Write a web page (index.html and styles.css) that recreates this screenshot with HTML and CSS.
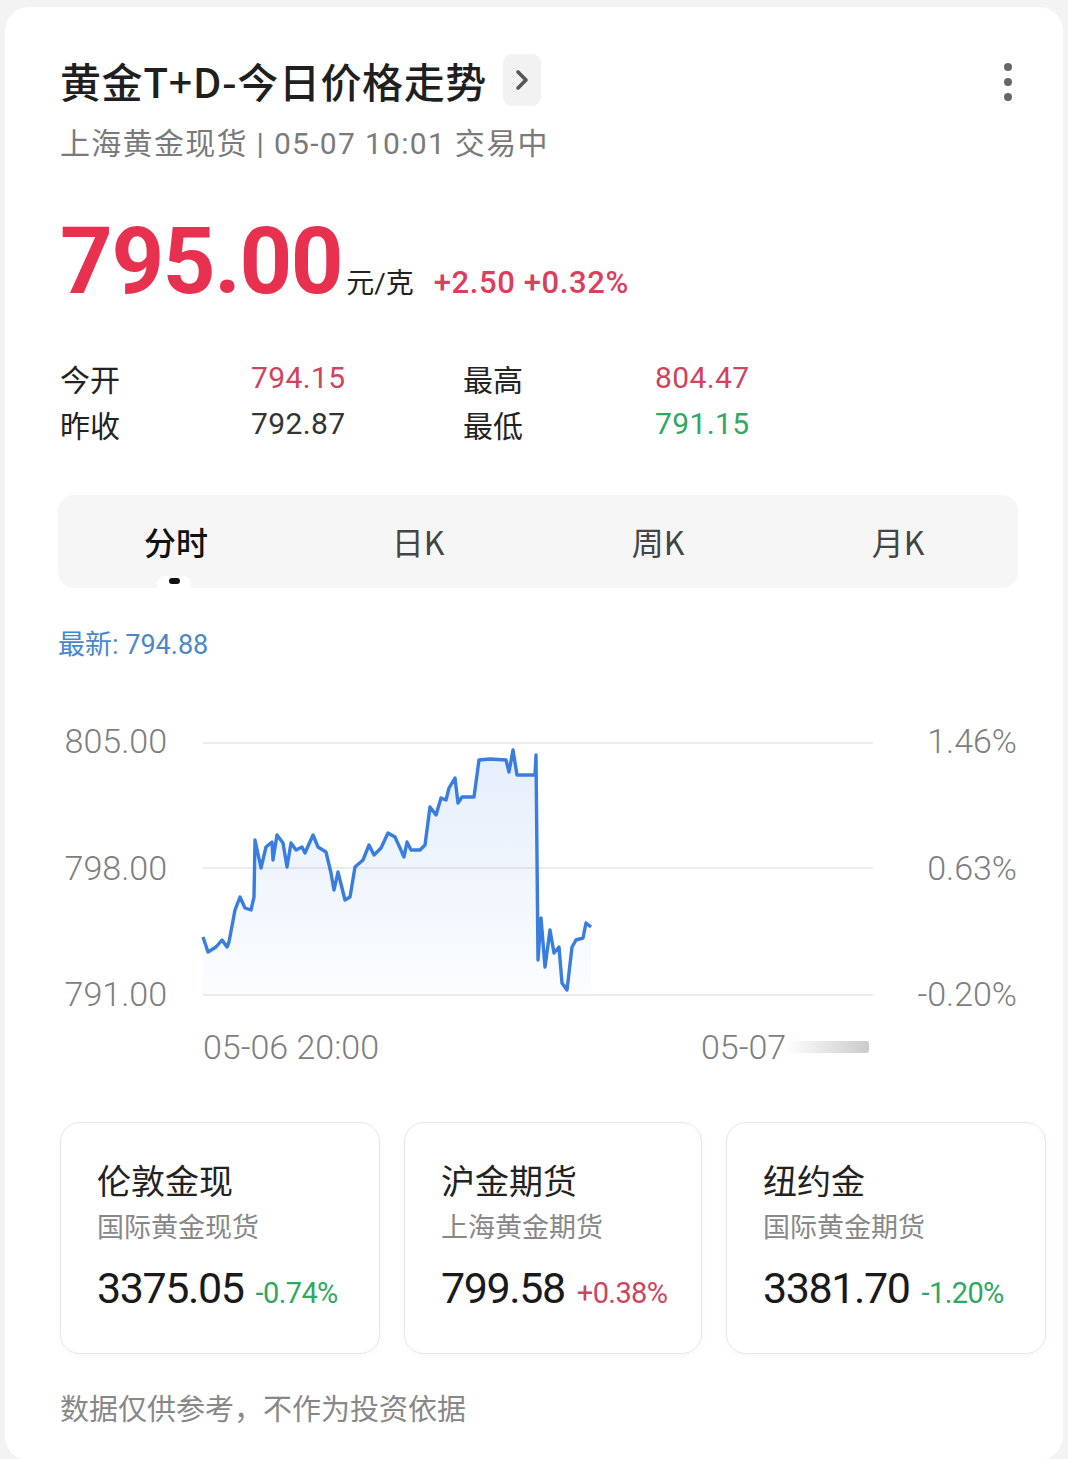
FILE: index.html
```html
<!DOCTYPE html>
<html lang="zh-CN">
<head>
    <meta charset="UTF-8">
    <meta name="viewport" content="width=device-width, initial-scale=1.0">
    <title>黄金T+D-今日价格走势</title>
    <link rel="stylesheet" href="styles.css">
</head>
<body>
    <main class="card">
        <!-- 标题 -->
        <header class="head">
            <div class="title-line">
                <h1 class="title">黄金T+D-今日价格走势</h1>
                <span class="chevron">
                    <svg width="20" height="24" viewBox="0 0 20 24"><path d="M6 4 L14 12 L6 20" fill="none" stroke="#555" stroke-width="3.6" stroke-linecap="round" stroke-linejoin="round"/></svg>
                </span>
            </div>
            <span class="more"><i></i><i></i><i></i></span>
        </header>
        <p class="sub">上海黄金现货 | 05-07 10:01 交易中</p>

        <!-- 当前价格 -->
        <div class="price-row">
            <span class="price">795.00</span>
            <span class="unit">元/克</span>
            <span class="change">+2.50 +0.32%</span>
        </div>

        <div class="stats">
            <span class="label">今开</span><span class="val up">794.15</span>
            <span class="label">最高</span><span class="val up">804.47</span>
            <span class="label">昨收</span><span class="val">792.87</span>
            <span class="label">最低</span><span class="val down">791.15</span>
        </div>

        <!-- 周期切换 -->
        <nav class="tabs">
            <span class="tab active">分时</span>
            <span class="tab">日K</span>
            <span class="tab">周K</span>
            <span class="tab">月K</span>
        </nav>

        <p class="latest">最新: 794.88</p>

        <svg class="chart" width="960" height="370" viewBox="0 0 960 370">
            <defs>
                <linearGradient id="area" x1="0" y1="0" x2="0" y2="1">
                    <stop offset="0" stop-color="#3a7de0" stop-opacity="0.13"/>
                    <stop offset="1" stop-color="#3a7de0" stop-opacity="0.02"/>
                </linearGradient>
                <linearGradient id="blur" x1="0" y1="0" x2="1" y2="0">
                    <stop offset="0" stop-color="#fff"/>
                    <stop offset="1" stop-color="#bdbdbd"/>
                </linearGradient>
            </defs>
            <g stroke="#ececec" stroke-width="2">
                <line x1="145" y1="43" x2="815" y2="43"/>
                <line x1="145" y1="168" x2="815" y2="168"/>
                <line x1="145" y1="295" x2="815" y2="295"/>
            </g>
            <g class="axis" text-anchor="end">
                <text x="109" y="53">805.00</text>
                <text x="109" y="180">798.00</text>
                <text x="109" y="306">791.00</text>
                <text x="959" y="53">1.46%</text>
                <text x="959" y="180">0.63%</text>
                <text x="959" y="306">-0.20%</text>
            </g>
            <polygon fill="url(#area)" points="145,237 150,252 158,247 164,240 169,247 171,242 177,210 182,197 187,208 193,210 196,197 197,140 203,168 208,147 214,142 215,160 219,135 225,143 229,167 233,143 238,150 244,147 247,153 255,135 260,147 268,152 273,173 276,190 280,172 287,200 292,197 297,167 305,160 311,145 316,155 323,148 330,133 337,137 342,148 346,157 349,142 353,150 362,150 367,145 372,107 378,115 383,98 388,100 391,88 397,78 400,103 404,97 416,97 421,60 432,59 448,60 451,72 455,50 459,75 477,75 478,55 480,260 483,218 487,267 492,230 496,253 501,247 504,283 509,290 514,247 518,240 525,238 528,223 533,227 533,295 145,295"/>
            <polyline fill="none" stroke="#3a7de0" stroke-width="3.4" stroke-linejoin="round" points="145,237 150,252 158,247 164,240 169,247 171,242 177,210 182,197 187,208 193,210 196,197 197,140 203,168 208,147 214,142 215,160 219,135 225,143 229,167 233,143 238,150 244,147 247,153 255,135 260,147 268,152 273,173 276,190 280,172 287,200 292,197 297,167 305,160 311,145 316,155 323,148 330,133 337,137 342,148 346,157 349,142 353,150 362,150 367,145 372,107 378,115 383,98 388,100 391,88 397,78 400,103 404,97 416,97 421,60 432,59 448,60 451,72 455,50 459,75 477,75 478,55 480,260 483,218 487,267 492,230 496,253 501,247 504,283 509,290 514,247 518,240 525,238 528,223 533,227"/>
            <g class="axis">
                <text x="145" y="359">05-06 20:00</text>
                <text x="643" y="359">05-07</text>
            </g>
            <rect x="727" y="341" width="84" height="12" rx="3" fill="url(#blur)" opacity="0.8"/>
        </svg>

        <!-- 相关品种 -->
        <div class="markets">
            <div class="market">
                <div class="m-name">伦敦金现</div>
                <div class="m-desc">国际黄金现货</div>
                <div class="m-price">3375.05<span class="m-chg down">-0.74%</span></div>
            </div>
            <div class="market">
                <div class="m-name">沪金期货</div>
                <div class="m-desc">上海黄金期货</div>
                <div class="m-price">799.58<span class="m-chg up">+0.38%</span></div>
            </div>
            <div class="market">
                <div class="m-name">纽约金</div>
                <div class="m-desc">国际黄金期货</div>
                <div class="m-price">3381.70<span class="m-chg down">-1.20%</span></div>
            </div>
        </div>

        <p class="note">数据仅供参考，不作为投资依据</p>
    </main>
</body>
</html>
```

FILE: styles.css
```css
/* 页面 */
body {
    margin: 0;
    background: #f3f3f3;
    font-family: Roboto, "Noto Sans CJK SC", sans-serif;
    color: #222;
}

.card {
    margin: 7px 5px 0;
    padding: 45px 17px 30px 55px;
    background: #fff;
    border-radius: 24px;
    min-height: 1380px;
    box-sizing: border-box;
}

/* 标题 */
.head {
    display: flex;
    justify-content: space-between;
    align-items: center;
    height: 56px;
}

.title-line {
    display: flex;
    align-items: center;
}

.title {
    margin: 0;
    font-family: "Noto Sans CJK SC", sans-serif;
    font-size: 41px;
    font-weight: 500;
    line-height: 56px;
    letter-spacing: 0.6px;
    color: #1f1f1f;
}

.chevron {
    display: flex;
    align-items: center;
    justify-content: center;
    width: 38px;
    height: 52px;
    margin-left: 16px;
    background: #f2f2f2;
    border-radius: 9px;
}

.more {
    display: flex;
    flex-direction: column;
    gap: 7px;
    margin-right: 34px;
    margin-top: 4px;
}

.more i {
    width: 8px;
    height: 8px;
    border-radius: 50%;
    background: #666;
}

.sub {
    margin: 16px 0 0;
    font-size: 30px;
    line-height: 40px;
    letter-spacing: 1.3px;
    color: #7a7a7a;
}

/* 价格 */
.price-row {
    display: flex;
    align-items: baseline;
    margin-top: 48px;
    height: 100px;
    line-height: 100px;
}

.price {
    font-size: 92px;
    font-weight: 700;
    color: #e8304f;
    letter-spacing: -1.4px;
}

.unit {
    margin-left: 4px;
    font-size: 28px;
    color: #222;
}

.change {
    margin-left: 20px;
    font-size: 31px;
    font-weight: 500;
    letter-spacing: 0.6px;
    color: #d9405e;
}

.stats {
    display: grid;
    grid-template-columns: 191px 212px 192px 1fr;
    margin-top: 43px;
    font-size: 30px;
    line-height: 46px;
}

.label {
    font-family: "Noto Sans CJK SC", sans-serif;
    color: #222;
}

.val {
    color: #333;
    letter-spacing: 0.4px;
}

.up {
    color: #d0435f;
}

.down {
    color: #2ea862;
}

/* 周期切换 */
.tabs {
    position: relative;
    display: grid;
    grid-template-columns: repeat(4, 1fr);
    width: 960px;
    height: 93px;
    margin: 48px 0 0 -2px;
    background: #f6f6f6;
    border-radius: 16px;
}

.tab {
    display: flex;
    align-items: center;
    justify-content: center;
    font-family: "Noto Sans CJK SC", sans-serif;
    font-size: 32px;
    color: #444;
    padding-bottom: 2px;
}

.tab.active {
    position: relative;
    color: #111;
    font-weight: 500;
    padding-right: 4px;
}

.tab.active::after {
    content: "";
    position: absolute;
    left: 50%;
    bottom: -2px;
    width: 34px;
    height: 14px;
    margin-left: -21px;
    background: #fff;
    border-radius: 8px 8px 0 0;
}

.tab.active::before {
    content: "";
    position: absolute;
    left: 50%;
    bottom: 4px;
    width: 11px;
    height: 6px;
    margin-left: -9px;
    background: #111;
    border-radius: 3px;
    z-index: 1;
}

.latest {
    margin: 39px 0 0 -2px;
    font-size: 27px;
    line-height: 36px;
    color: #4a87c9;
}

/* 图表 */
.chart {
    display: block;
    margin: 37px 0 0 -2px;
}

.axis text {
    font-family: Roboto, sans-serif;
    font-size: 34px;
    font-weight: 300;
    fill: #7e7e7e;
}

/* 相关品种 */
.markets {
    display: grid;
    grid-template-columns: 320px 298px 320px;
    gap: 24px;
    margin-top: 52px;
}

.market {
    height: 232px;
    padding: 34px 0 0 36px;
    box-sizing: border-box;
    border: 1.5px solid #e7e7e7;
    border-radius: 20px;
    box-shadow: 0 2px 6px rgba(0, 0, 0, 0.03);
}

.m-name {
    font-family: "Noto Sans CJK SC", sans-serif;
    font-size: 34px;
    line-height: 46px;
    color: #222;
}

.m-desc {
    margin-top: 6px;
    font-size: 27px;
    line-height: 38px;
    color: #888;
}

.m-price {
    margin-top: 16px;
    font-size: 43px;
    line-height: 50px;
    letter-spacing: -1.4px;
    color: #1a1a1a;
}

.m-chg {
    margin-left: 12px;
    font-size: 29px;
    letter-spacing: -0.6px;
}

.note {
    margin: 36px 0 0;
    font-size: 29px;
    line-height: 40px;
    color: #888;
}
```
